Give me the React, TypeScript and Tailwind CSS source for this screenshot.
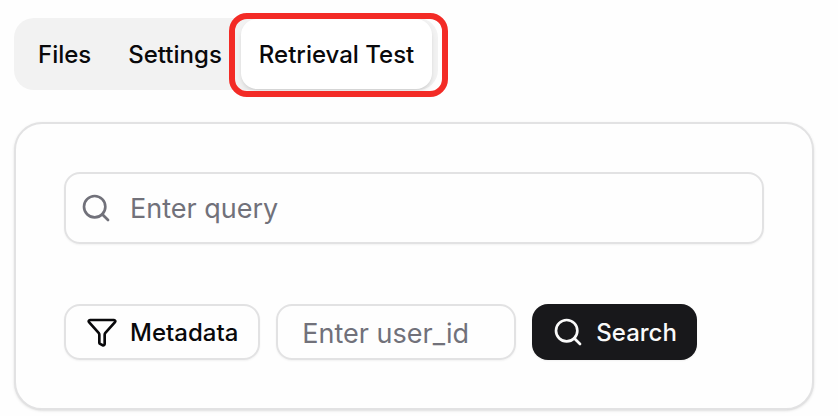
import React, { useState } from 'react'
import { Funnel, Search } from 'lucide-react'

const tabs = ['Files', 'Settings', 'Retrieval Test']

const Tabs = ({active, onSelect}: {active: string, onSelect: (tab: string) => void}) => {
  return (
    <div role="tablist" className="flex gap-px w-fit h-18 py-px px-1.5 rounded-[20px] bg-[#f2f2f2]">
      {tabs.map((tab) => (
        <button
          key={tab}
          type="button"
          role="tab"
          aria-selected={tab === active}
          onClick={() => onSelect(tab)}
          className={`relative px-[18px] pt-0.5 rounded-2xl text-2xl font-medium whitespace-nowrap ${tab === active ? 'bg-white shadow-md' : ''}`}
        >
          {tab}
          {/* Highlight frame around the current tab */}
          {tab === active && (
            <span className="absolute -left-3 -right-4 -top-1.5 -bottom-2 border-6 border-[#f32b26] rounded-[18px] pointer-events-none" />
          )}
        </button>
      ))}
    </div>
  )
}

const RetrievalForm = () => {
  const [query, setQuery] = useState('')
  const [userId, setUserId] = useState('')

  return (
    <form
      onSubmit={(e) => e.preventDefault()}
      className="flex flex-col gap-15 p-12 border-2 border-[#e2e2e3] rounded-[28px] bg-[#fefefe] shadow-sm"
    >
      <label className="flex items-center gap-[18px] h-18 px-3.5 border-2 border-[#e2e2e3] rounded-2xl shadow-xs">
        <Search size={32} className="shrink-0 text-[#71717a]" />
        <input
          type="text"
          aria-label="Query"
          placeholder="Enter query"
          value={query}
          onChange={(e) => setQuery(e.target.value)}
          className="grow min-w-0 pt-0.5 text-[27px] outline-none placeholder:text-[#71717a]"
        />
      </label>

      <div className="flex gap-4">
        <button
          type="button"
          className="flex items-center gap-3 h-14 px-5 border-2 border-[#e2e2e3] rounded-2xl text-2xl font-medium shadow-xs"
        >
          <Funnel size={32} />
          <span className="pt-0.5">Metadata</span>
        </button>
        <input
          type="text"
          aria-label="User ID"
          placeholder="Enter user_id"
          value={userId}
          onChange={(e) => setUserId(e.target.value)}
          className="w-60 h-14 px-6 pt-0.5 border-2 border-[#e2e2e3] rounded-2xl text-[27px] shadow-xs outline-none placeholder:text-[#71717a]"
        />
        <button
          type="submit"
          className="flex items-center gap-3 h-14 px-5 rounded-2xl bg-[#18181b] text-2xl font-medium text-[#fafafa] shadow-xs"
        >
          <Search size={32} />
          <span className="pt-0.5">Search</span>
        </button>
      </div>
    </form>
  )
}

const App = () => {
  const [active, setActive] = useState('Retrieval Test')

  return (
    <main className="flex flex-col gap-8 pt-[18px] pb-1.5 pl-3.5 pr-6 bg-[#fefefe] font-['Inter','Liberation_Sans',sans-serif] text-[#09090b]">
      <Tabs active={active} onSelect={setActive} />
      <RetrievalForm />
    </main>
  )
}

export default App
